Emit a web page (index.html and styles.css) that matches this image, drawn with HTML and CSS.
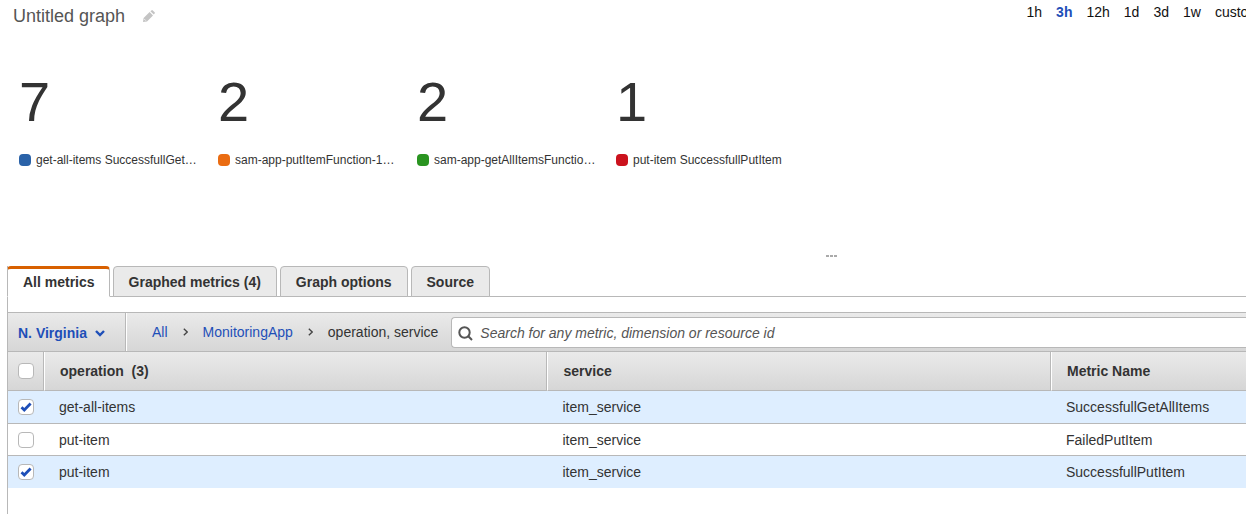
FILE: index.html
```html
<!DOCTYPE html>
<html lang="en">
<head>
<meta charset="utf-8">
<title>Metrics</title>
<link rel="stylesheet" href="styles.css">
</head>
<body>
<header class="graph-header">
  <h1 class="graph-title">Untitled graph</h1>
  <button class="icon-button" type="button" aria-label="Edit graph name">
    <svg class="pencil" viewBox="0 0 12 12" aria-hidden="true"><path d="M0 12l.6-4L6.600 2l3.400 3.400-6 6zM7.400 1.200L8.400.4q.7-.6 1.400 0l1.800 1.800q.6.7 0 1.400l-.8 1z"/><path class="pencil-tip" d="M1.500 9.300l1.200 1.200"/></svg>
  </button>
  <nav class="ranges" aria-label="Time range">
    <a href="#">1h</a>
    <a href="#" class="active">3h</a>
    <a href="#">12h</a>
    <a href="#">1d</a>
    <a href="#">3d</a>
    <a href="#">1w</a>
    <a href="#">custom</a>
  </nav>
</header>

<section class="numbers">
  <div class="number">
    <div class="value">7</div>
    <div class="legend"><span class="swatch blue"></span>get-all-items SuccessfullGet…</div>
  </div>
  <div class="number">
    <div class="value">2</div>
    <div class="legend"><span class="swatch orange"></span>sam-app-putItemFunction-1…</div>
  </div>
  <div class="number">
    <div class="value">2</div>
    <div class="legend"><span class="swatch green"></span>sam-app-getAllItemsFunctio…</div>
  </div>
  <div class="number">
    <div class="value">1</div>
    <div class="legend"><span class="swatch red"></span>put-item SuccessfullPutItem</div>
  </div>
</section>

<div class="splitter"><span class="grip"></span><span class="grip"></span><span class="grip"></span></div>

<main class="panel">
  <div class="tabs" role="tablist">
    <button class="tab selected" type="button" role="tab" aria-selected="true">All metrics</button>
    <button class="tab" type="button" role="tab">Graphed metrics (4)</button>
    <button class="tab" type="button" role="tab">Graph options</button>
    <button class="tab" type="button" role="tab">Source</button>
  </div>

  <div class="toolbar">
    <button class="region" type="button">N. Virginia
      <svg class="caret" viewBox="0 0 10 7" aria-hidden="true"><path d="M1 1l4 4 4-4"/></svg>
    </button>
    <nav class="crumbs" aria-label="Breadcrumb">
      <a href="#">All</a>
      <svg class="arrow" viewBox="0 0 5 8" aria-hidden="true"><path d="M.8.8L4.200 4 .8 7.200"/></svg>
      <a href="#">MonitoringApp</a>
      <svg class="arrow" viewBox="0 0 5 8" aria-hidden="true"><path d="M.8.8L4.200 4 .8 7.200"/></svg>
      <span>operation, service</span>
    </nav>
    <label class="search">
      <svg class="lens" viewBox="0 0 15 15" aria-hidden="true"><circle cx="6.500" cy="6.500" r="5.200"/><path d="M10.300 10.300L14 14"/></svg>
      <input type="text" aria-label="Search metrics" placeholder="Search for any metric, dimension or resource id">
    </label>
  </div>

  <table class="metrics">
    <thead>
      <tr>
        <th class="check"><input type="checkbox" aria-label="Select all"></th>
        <th class="wide">operation&nbsp; (3)</th>
        <th class="wide">service</th>
        <th>Metric Name</th>
      </tr>
    </thead>
    <tbody>
      <tr class="picked">
        <td class="check"><input type="checkbox" aria-label="get-all-items SuccessfullGetAllItems" checked></td>
        <td>get-all-items</td><td>item_service</td><td>SuccessfullGetAllItems</td>
      </tr>
      <tr>
        <td class="check"><input type="checkbox" aria-label="put-item FailedPutItem"></td>
        <td>put-item</td><td>item_service</td><td>FailedPutItem</td>
      </tr>
      <tr class="picked">
        <td class="check"><input type="checkbox" aria-label="put-item SuccessfullPutItem" checked></td>
        <td>put-item</td><td>item_service</td><td>SuccessfullPutItem</td>
      </tr>
    </tbody>
  </table>
</main>
</body>
</html>
```

FILE: styles.css
```css
* {
  box-sizing: border-box;
}

body {
  margin: 0;
  min-height: 100vh;
  display: flex;
  flex-direction: column;
  overflow: hidden;
  background: #fff;
  color: #333;
  font: 14px/16px "Liberation Sans", Arial, sans-serif;
}

button,
input {
  margin: 0;
  font: inherit;
  color: inherit;
}

button {
  border: 0;
  padding: 0;
  background: none;
  cursor: pointer;
}

a {
  color: #1e4fb8;
  text-decoration: none;
}

/* Graph header */
.graph-header {
  display: flex;
  align-items: center;
  height: 32px;
  padding-left: 13px;
}

.graph-title {
  margin: 0;
  font-size: 18px;
  font-weight: 400;
  line-height: 20px;
  color: #555;
}

.icon-button {
  display: flex;
  margin-left: 18px;
}

.pencil {
  width: 12px;
  height: 12px;
  fill: #c4c4c4;
}

.pencil-tip {
  stroke: #fff;
  stroke-width: 1;
}

/* The range list runs on past the right edge of the window. */
.ranges {
  display: flex;
  align-self: flex-start;
  gap: 14px;
  margin: 4px -14px 0 auto;
  white-space: nowrap;
}

.ranges a {
  color: #111;
}

.ranges .active {
  color: #1e4fb8;
  font-weight: 700;
}

/* Number widgets */
.numbers {
  display: flex;
  padding: 38px 0 0 19px;
  height: 219px;
}

.number {
  width: 199px;
}

.value {
  font-size: 56px;
  line-height: 64px;
}

.legend {
  display: flex;
  align-items: center;
  gap: 5px;
  margin-top: 18px;
  font-size: 12px;
  white-space: nowrap;
}

.swatch {
  width: 12px;
  height: 12px;
  border-radius: 4px;
}

.blue { background: #2a62a8; }
.orange { background: #ea6c12; }
.green { background: #2a9420; }
.red { background: #cb121d; }

.splitter {
  display: flex;
  gap: 1px;
  padding: 4px 0 9px 66.300%;
}

.grip {
  width: 3px;
  height: 2px;
  background: #aaa;
}

/* Panel */
.panel {
  flex: 1;
  margin-left: 7px;
  border-left: 1px solid #b8b8b8;
}

.tabs {
  display: flex;
  gap: 3px;
  margin-left: -1px;
  background: linear-gradient(#b8b8b8, #b8b8b8) bottom / 100% 1px no-repeat;
}

.tab {
  height: 31px;
  padding: 0 15px;
  border: 1px solid #b8b8b8;
  border-radius: 4px 4px 0 0;
  background: #eaeaea;
  font-weight: 700;
  white-space: nowrap;
}

.tab.selected {
  padding: 0 14px 2px 15px;
  border-top: 3px solid #d86000;
  border-bottom-color: #fff;
  background: #fff;
}

.toolbar {
  display: flex;
  height: 40px;
  margin-top: 15px;
  border-top: 1px solid #b8b8b8;
  border-bottom: 1px solid #b8b8b8;
  background: linear-gradient(#eaeaea, #d6d6d6);
}

.region {
  display: flex;
  align-items: center;
  gap: 8px;
  padding: 2px 20px 0 10px;
  border-right: 1px solid #b8b8b8;
  color: #1e4fb8;
  font-weight: 700;
  white-space: nowrap;
}

.caret {
  width: 10px;
  height: 7px;
  fill: none;
  stroke: #1e4fb8;
  stroke-width: 2.400;
}

.crumbs {
  display: flex;
  align-items: center;
  gap: 15px;
  padding: 0 13px 0 25px;
  border-left: 1px solid #fff;
  white-space: nowrap;
}

.arrow {
  width: 5px;
  height: 8px;
  fill: none;
  stroke: #444;
  stroke-width: 1.300;
}

.search {
  display: flex;
  flex: 1;
  align-items: center;
  gap: 7px;
  margin: 4px 0 3px;
  padding-left: 6px;
  border: 1px solid #b8b8b8;
  border-right: 0;
  border-radius: 4px 0 0 4px;
  background: #fff;
}

.lens {
  width: 15px;
  height: 15px;
  margin-top: 2px;
  fill: none;
  stroke: #555;
  stroke-width: 2;
}

.search input {
  flex: 1;
  min-width: 0;
  padding: 0;
  border: 0;
  outline: 0;
  background: none;
}

.search input::placeholder {
  color: #555;
  font-style: italic;
  opacity: 1;
}

/* Metrics table */
.metrics {
  width: 100%;
  border-spacing: 0;
  table-layout: fixed;
}

.metrics th {
  height: 39px;
  padding: 0 15px;
  border-left: 1px solid #fff;
  border-right: 1px solid #b8b8b8;
  border-bottom: 1px solid #b8b8b8;
  background: linear-gradient(#eaeaea, #d6d6d6);
  text-align: left;
}

.metrics th:last-child {
  border-right: 0;
}

.metrics .wide {
  width: 40.670%;
}

.metrics td {
  height: 32px;
  padding: 0 15px;
  border-bottom: 1px solid #b8b8b8;
}

.metrics tr:first-child td {
  height: 33px;
}

.metrics tr:last-child td {
  border-bottom: 0;
}

.picked td {
  background: #deeeff;
}

.metrics .check {
  width: 36px;
  padding: 0 0 0 10px;
  border-left: 0;
}

.check input {
  display: block;
  appearance: none;
  width: 16px;
  height: 16px;
  border: 1px solid #b8b8b8;
  border-radius: 4px;
  background: #fff;
}

.check input:checked {
  background: #fff url("data:image/svg+xml,%3Csvg xmlns='http://www.w3.org/2000/svg' viewBox='0 0 14 14'%3E%3Cpath d='M2.500 7.200L5.300 10 11.600 3.500' fill='none' stroke='%231e4fb8' stroke-width='2.800'/%3E%3C/svg%3E") center / 14px no-repeat;
}
```
